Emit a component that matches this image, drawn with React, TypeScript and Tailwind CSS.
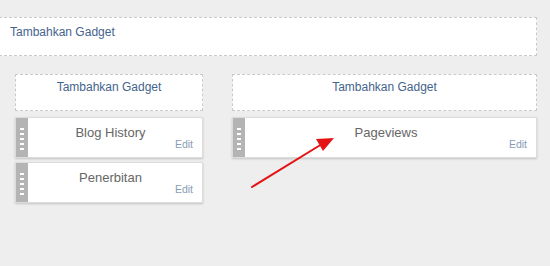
import React from 'react';

const Grip = () => (
  <div className="w-[12px] shrink-0 bg-[#b4b4b4] flex flex-col items-center pt-[10px] gap-[3px]">
    {[0, 1, 2, 3, 4].map((i) => (
      <div key={i} className="w-[4px] h-[2px] bg-white" />
    ))}
  </div>
);

const AddGadget = () => (
  <div className="h-[37px] bg-white border border-dashed border-[#cacaca] text-center pt-[5px] text-[12px] leading-[14px] text-[#44648d]">
    Tambahkan Gadget
  </div>
);

const Gadget = ({ title }: { title: string }) => (
  <div className="h-[41px] flex bg-white border border-[#dcdcdc] shadow-[0_1px_2px_rgba(0,0,0,0.18)]">
    <Grip />
    <div className="flex-1 flex flex-col pt-[7px] pr-[9px]">
      <div className="text-center text-[13px] leading-[15px] text-[#666666]">{title}</div>
      <div className="text-right text-[10.5px] leading-[12px] text-[#8a9cb5] mt-[-2px]">Edit</div>
    </div>
  </div>
);

export default function App() {
  return (
    <div
      className="relative w-[550px] h-[266px] overflow-hidden bg-[#eeeeee] pt-[17px]"
      style={{ fontFamily: '"Liberation Sans", Arial, sans-serif' }}
    >
      {/* header gadget area */}
      <div className="ml-[-1px] w-[538px] h-[39px] bg-white border border-dashed border-[#cacaca] pl-[10px] pt-[7px] text-[12px] leading-[14px] text-[#44648d]">
        Tambahkan Gadget
      </div>

      <div className="flex mt-[18px] pl-[15px] gap-[29px]">
        <div className="w-[188px] flex flex-col">
          <AddGadget />
          <div className="mt-[6px] flex flex-col gap-[4px]">
            <Gadget title="Blog History" />
            <Gadget title="Penerbitan" />
          </div>
        </div>
        <div className="w-[305px] flex flex-col">
          <AddGadget />
          <div className="mt-[6px]">
            <Gadget title="Pageviews" />
          </div>
        </div>
      </div>

      {/* red arrow */}
      <svg className="absolute left-0 top-0" width="550" height="266" viewBox="0 0 550 266">
        <line x1="252" y1="187" x2="322" y2="144" stroke="#e41414" strokeWidth="2" strokeLinecap="round" />
        <polygon points="334,138 316,139 323,151" fill="#e41414" />
      </svg>
    </div>
  );
}
